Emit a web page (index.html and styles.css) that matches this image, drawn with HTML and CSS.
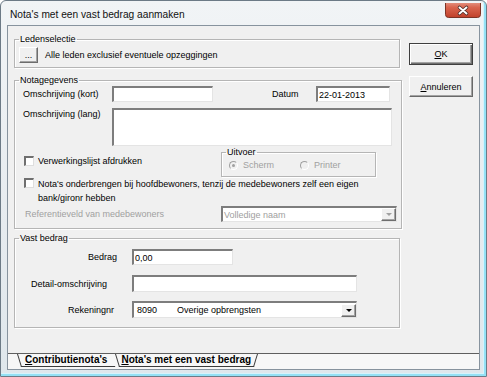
FILE: index.html
```html
<!DOCTYPE html>
<html lang="nl">

<head>
  <meta charset="UTF-8">
  <title>Nota's met een vast bedrag aanmaken</title>
  <link rel="stylesheet" href="styles.css">
</head>

<body>

  <div class="window">
    <!-- Title bar -->
    <div class="titlebar">
      <span class="title">Nota's met een vast bedrag aanmaken</span>
      <span class="close-btn">
        <svg width="36" height="15" viewBox="0 0 36 15">
          <defs>
            <linearGradient id="closeGrad" x1="0" y1="0" x2="0" y2="1">
              <stop offset="0" stop-color="#eab0a3" />
              <stop offset="0.45" stop-color="#d9654f" />
              <stop offset="1" stop-color="#c0402a" />
            </linearGradient>
          </defs>
          <rect x="0.5" y="-4" width="35" height="18.5" rx="3" fill="url(#closeGrad)" stroke="#7c3326" />
          <path d="M14.5 4.5 L21.5 10.5 M21.5 4.5 L14.5 10.5" stroke="#4a2a26" stroke-width="3.6" stroke-linecap="round" />
          <path d="M14.5 4.5 L21.5 10.5 M21.5 4.5 L14.5 10.5" stroke="#ffffff" stroke-width="2" stroke-linecap="round" />
        </svg>
      </span>
    </div>

    <!-- Dialog body -->
    <div class="client">
      <div class="main">
        <div class="form">

          <fieldset class="group group-leden">
            <legend>Ledenselectie</legend>
            <div class="leden-row">
              <button class="btn-small">...</button>
              <span class="leden-text">Alle leden exclusief eventuele opzeggingen</span>
            </div>
          </fieldset>

          <fieldset class="group group-nota">
            <legend>Notagegevens</legend>
            <div class="group-body">
              <div class="row row-kort">
                <label class="lbl lbl-omschr">Omschrijving (kort)</label>
                <input class="field field-kort" type="text">
                <label class="lbl lbl-datum">Datum</label>
                <input class="field field-datum" type="text" value="22-01-2013">
              </div>
              <div class="row row-lang">
                <label class="lbl lbl-omschr">Omschrijving (lang)</label>
                <textarea class="field field-lang"></textarea>
              </div>
              <div class="row row-print">
                <div class="check check-print">
                  <span class="checkbox"></span>
                  <span>Verwerkingslijst afdrukken</span>
                </div>
                <fieldset class="group group-uitvoer">
                  <legend>Uitvoer</legend>
                  <div class="radios">
                    <span class="radio-item"><span class="radio checked"></span>Scherm</span>
                    <span class="radio-item"><span class="radio"></span>Printer</span>
                  </div>
                </fieldset>
              </div>
              <div class="check check-hoofd">
                <span class="checkbox"></span>
                <span>Nota's onderbrengen bij hoofdbewoners, tenzij de medebewoners zelf een eigen<br>bank/gironr hebben</span>
              </div>
              <div class="row row-ref">
                <label class="lbl lbl-ref">Referentieveld van medebewoners</label>
                <div class="field combo combo-ref">
                  <span class="combo-text">Volledige naam</span>
                  <span class="combo-btn disabled"><span class="arrow"></span></span>
                </div>
              </div>
            </div>
          </fieldset>

          <fieldset class="group group-vast">
            <legend>Vast bedrag</legend>
            <div class="vrow vrow-bedrag">
              <label class="vlbl vlbl-bedrag">Bedrag</label>
              <input class="field field-bedrag" type="text" value="0,00">
            </div>
            <div class="vrow vrow-detail">
              <label class="vlbl vlbl-detail">Detail-omschrijving</label>
              <input class="field field-wide" type="text">
            </div>
            <div class="vrow vrow-rek">
              <label class="vlbl vlbl-rek">Rekeningnr</label>
              <div class="field combo field-wide">
                <span class="combo-text"><span class="rek-nr">8090</span>Overige opbrengsten</span>
                <span class="combo-btn"><span class="arrow"></span></span>
              </div>
            </div>
          </fieldset>

        </div>

        <div class="buttons">
          <button class="btn btn-ok"><u>O</u>K</button>
          <button class="btn btn-cancel"><u>A</u>nnuleren</button>
        </div>
      </div>

      <!-- Tabs -->
      <div class="tabstrip">
        <span class="tab tab-first"><u>C</u>ontributienota's</span>
        <span class="tab tab-active"><u>N</u>ota's met een vast bedrag</span>
      </div>
    </div>
  </div>

</body>

</html>
```

FILE: styles.css
```css
/* Reset */
* {
  margin: 0;
  padding: 0;
  box-sizing: border-box;
}

body {
  font-family: "Liberation Sans", Arial, sans-serif;
  font-size: 9px;
  line-height: 12px;
  color: #000;
  background-color: #fff;
  overflow: hidden;
}

/* Window frame */
.window {
  width: 487px;
  height: 377px;
  border: 1px solid #6c7a86;
  border-radius: 6px 6px 0 0;
  background: linear-gradient(180deg, #f1f4f6 0%, #e6ebef 60%, #dfe7ec 100%);
  box-shadow: inset -2px -2px 0 #94e1f5, inset -3px -3px 0 #d6f3fb;
  display: flex;
  flex-direction: column;
}

.titlebar {
  height: 24px;
  display: flex;
  justify-content: space-between;
  align-items: flex-start;
  padding: 0 5px 0 9px;
}

.title {
  margin-top: 8px;
  font-size: 10.2px;
  line-height: 12px;
  color: #111;
}

.close-btn {
  display: flex;
  margin-top: 2px;
}

.client {
  flex: 1;
  margin: 0 6px 6px 6px;
  border: 1px solid #87939e;
  background-color: #f0f0f0;
  display: flex;
  flex-direction: column;
}

.main {
  height: 327px;
  display: flex;
}

.form {
  width: 392px;
  padding: 7px 0 0 6px;
}

/* Group boxes */
.group {
  border: 1px solid #b5b5b5;
  box-shadow: inset 1px 1px 0 #fff, 1px 1px 0 #fff;
  padding: 0 4px;
}

.group legend {
  padding: 0 1px;
  line-height: 12px;
  font-size: 9px;
}

.group-leden {
  height: 35px;
}

.leden-row {
  display: flex;
  align-items: center;
  padding-top: 2px;
}

.btn-small {
  width: 19px;
  height: 16px;
  font: inherit;
  line-height: 8px;
  background-color: #f0f0f0;
  border: 1px solid;
  border-color: #fff #6d6d6d #6d6d6d #fff;
  box-shadow: inset -1px -1px 0 #a3a3a3;
  display: flex;
  align-items: flex-end;
  justify-content: center;
  padding-bottom: 3px;
}

.leden-text {
  margin-left: 7px;
}

.group-nota {
  height: 155px;
  margin-top: 6px;
}

.group-body {
  padding-left: 4px;
}

.row {
  display: flex;
  align-items: center;
}

.row-kort {
  height: 16px;
}

.lbl-omschr {
  width: 89px;
}

.lbl-datum {
  width: 44px;
  margin-left: 59px;
}

/* Text fields */
.field {
  font: inherit;
  height: 16px;
  border-style: solid;
  border-width: 2px 1px 1px 2px;
  border-color: #7d7d7d #e4e4e4 #e4e4e4 #7d7d7d;
  background-color: #fff;
  padding: 0 1px;
  outline: none;
  color: #000;
}

.field-kort {
  width: 101px;
}

.field-datum {
  width: 74px;
}

.row-lang {
  align-items: flex-start;
  margin-top: 6px;
}

.field-lang {
  width: 280px;
  height: 38px;
  resize: none;
  overflow: hidden;
}

.row-print {
  height: 31px;
  align-items: flex-start;
}

/* Checkboxes and radios */
.check {
  display: flex;
  gap: 4px;
}

.checkbox {
  width: 10px;
  height: 10px;
  margin-left: 1px;
  flex-shrink: 0;
  background-color: #fff;
  border-style: solid;
  border-width: 2px 1px 1px 2px;
  border-color: #6f6f6f #dedede #dedede #6f6f6f;
}

.check-print {
  width: 198px;
  height: 12px;
  margin-top: 9px;
  align-items: center;
}

.group-uitvoer {
  width: 151px;
  height: 31px;
}

.radios {
  display: flex;
  align-items: center;
  height: 14px;
  padding-left: 3px;
}

.radio-item {
  width: 71px;
  display: flex;
  align-items: center;
  gap: 5px;
  color: #a0a0a0;
}

.radio {
  width: 9px;
  height: 9px;
  border-radius: 50%;
  border: 1px solid;
  border-color: #a0a0a0 #fff #fff #a0a0a0;
  background-color: #f0f0f0;
  display: flex;
  align-items: center;
  justify-content: center;
}

.radio.checked::after {
  content: '';
  width: 3px;
  height: 3px;
  border-radius: 50%;
  background-color: #a0a0a0;
}

.check-hoofd {
  line-height: 14px;
  align-items: flex-start;
}

.check-hoofd .checkbox {
  margin-top: 1px;
}

.row-ref {
  height: 16px;
  margin-top: 1px;
}

.lbl-ref {
  width: 198px;
  padding-left: 2px;
  color: #a0a0a0;
}

/* Combo boxes */
.combo {
  display: flex;
  align-items: center;
  justify-content: space-between;
  padding: 0 0 0 1px;
}

.combo-ref {
  width: 176px;
}

.combo-ref .combo-text {
  color: #a0a0a0;
}

.combo-btn {
  width: 15px;
  height: 13px;
  background-color: #f0f0f0;
  border: 1px solid;
  border-color: #fff #6d6d6d #6d6d6d #fff;
  box-shadow: inset -1px -1px 0 #a3a3a3;
  display: flex;
  align-items: center;
  justify-content: center;
}

.arrow {
  width: 0;
  height: 0;
  border-left: 3px solid transparent;
  border-right: 3px solid transparent;
  border-top: 3px solid #000;
}

.combo-btn.disabled .arrow {
  border-top-color: #a0a0a0;
}

/* Vast bedrag */
.group-vast {
  height: 96px;
  margin-top: 3px;
}

.vrow {
  display: flex;
  align-items: center;
}

.vrow-bedrag {
  height: 16px;
  margin-top: 5px;
}

.vrow-detail {
  height: 17px;
  margin-top: 10px;
}

.vrow-rek {
  height: 17px;
  margin-top: 9px;
}

.vlbl {
  width: 113px;
  text-align: right;
}

.vlbl-bedrag {
  padding-right: 15px;
}

.vlbl-detail {
  padding-right: 25px;
}

.vlbl-rek {
  padding-right: 18px;
}

.field-bedrag {
  width: 101px;
}

.field-wide {
  width: 225px;
  height: 17px;
}

.vrow-rek .combo {
  padding-left: 3px;
}

.rek-nr {
  display: inline-block;
  width: 40px;
}

/* Buttons */
.buttons {
  display: flex;
  flex-direction: column;
  gap: 11px;
  margin-left: 9px;
  padding-top: 17px;
}

.btn {
  width: 64px;
  font: inherit;
  background-color: #f0f0f0;
  color: #000;
}

.btn-ok {
  height: 22px;
  border: 1px solid #3f3f3f;
  box-shadow: inset 1px 1px 0 #fff, inset -1px -1px 0 #6f6f6f, inset -2px -2px 0 #a3a3a3;
}

.btn-cancel {
  height: 21px;
  border: 1px solid;
  border-color: #fff #696969 #696969 #fff;
  box-shadow: inset -1px -1px 0 #a3a3a3;
}

/* Tab strip */
.tabstrip {
  flex: 1;
  border-top: 1px solid #5f5f5f;
  background-color: #f7f7f7;
  display: flex;
  align-items: flex-start;
  padding-left: 11px;
}

.tab {
  position: relative;
  z-index: 0;
  height: 13px;
  line-height: 12px;
  font-size: 10px;
  font-weight: bold;
}

.tab::before,
.tab::after {
  content: '';
  position: absolute;
  top: 0;
  bottom: 0;
  width: 50%;
  z-index: -1;
  background-color: #f7f7f7;
  border-bottom: 1px solid #3a3a3a;
}

.tab::before {
  left: 0;
  border-left: 1px solid #3a3a3a;
  transform: skewX(17deg);
}

.tab::after {
  right: 0;
  border-right: 1px solid #3a3a3a;
  transform: skewX(-17deg);
}

.tab-first {
  padding: 0 10px 0 6px;
}

.tab-first::after {
  border-right: none;
}

.tab-active {
  padding: 0 5px 0 4px;
}
```
